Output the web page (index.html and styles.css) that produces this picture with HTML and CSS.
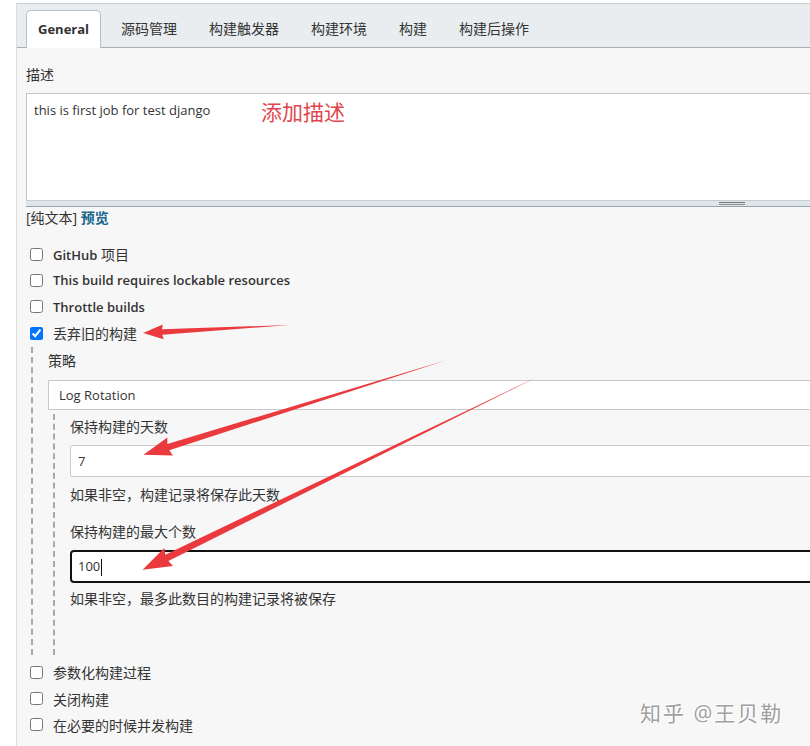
FILE: index.html
```html
<!DOCTYPE html>
<html lang="zh-CN">
<head>
    <meta charset="UTF-8">
    <meta name="viewport" content="width=device-width, initial-scale=1.0">
    <title>General - 配置</title>
    <link rel="stylesheet" href="styles.css">
</head>
<body>
<div class="page">
    <div class="tabbar">
        <div class="tab active">General</div>
        <div class="tab">源码管理</div>
        <div class="tab">构建触发器</div>
        <div class="tab">构建环境</div>
        <div class="tab">构建</div>
        <div class="tab">构建后操作</div>
    </div>

    <div class="content">
        <div class="label">描述</div>
        <div class="textarea">
            <div class="textarea-text">this is first job for test django</div>
            <span class="note">添加描述</span>
            <div class="textarea-handle"><span class="grip"></span></div>
        </div>
        <div class="format">[纯文本] <a class="preview">预览</a></div>

        <div class="options">
            <label class="option"><input type="checkbox"><span><b class="strong">GitHub</b> 项目</span></label>
            <label class="option"><input type="checkbox"><b class="strong">This build requires lockable resources</b></label>
            <label class="option"><input type="checkbox"><b class="strong">Throttle builds</b></label>
            <label class="option"><input type="checkbox" checked><span>丢弃旧的构建</span></label>
        </div>

        <div class="nested">
            <div class="label">策略</div>
            <div class="select">Log Rotation</div>
            <div class="nested inner">
                <div class="label">保持构建的天数</div>
                <div class="field">7</div>
                <div class="help">如果非空，构建记录将保存此天数</div>
                <div class="label second">保持构建的最大个数</div>
                <div class="field focused">100<span class="caret"></span></div>
                <div class="help help-last">如果非空，最多此数目的构建记录将被保存</div>
            </div>
        </div>

        <div class="options bottom">
            <label class="option"><input type="checkbox"><span>参数化构建过程</span></label>
            <label class="option"><input type="checkbox"><span>关闭构建</span></label>
            <label class="option"><input type="checkbox"><span>在必要的时候并发构建</span></label>
        </div>
    </div>
</div>

<!-- annotation arrows drawn over the screenshot -->
<svg class="arrows" width="810" height="746" viewBox="0 0 810 746">
    <g fill="#ea3a3d">
        <polygon transform="translate(290 325) rotate(176.9)" points="0,0 128,-2.8 127,-7.5 147,0 127,7.5 128,2.8"/>
        <polygon transform="translate(447 360) rotate(162.65)" points="0,0 292,-3.3 290,-9.5 318,0 290,9.5 292,3.3"/>
        <polygon transform="translate(537 377) rotate(153.96)" points="0,0 412,-3.5 410,-10 439,0 410,10 412,3.5"/>
    </g>
</svg>

<div class="watermark">知乎 @王贝勒</div>
</body>
</html>
```

FILE: styles.css
```css
body {
    margin: 0;
    background-color: #ffffff;
    color: #333333;
    font-family: "Open Sans", "Noto Sans CJK SC", sans-serif;
    font-size: 14px;
    position: relative;
    height: 746px;
    overflow: hidden;
}

.page {
    margin-left: 16px;
    margin-top: 3px;
    border-left: 1px solid #dcdcdc;
    border-top: 1px solid #c9cdd0;
    background-color: #f7f7f7;
    height: 742px;
    overflow: hidden;
}

.tabbar {
    display: flex;
    align-items: flex-end;
    height: 43px;
    padding-left: 9px;
    background-color: #e9edf0;
    border-bottom: 1px solid #a9b0b5;
}

.tab {
    height: 37px;
    line-height: 37px;
    padding: 0 16px;
    font-size: 14px;
    color: #333333;
    white-space: nowrap;
}

.tab.active {
    height: 37px;
    line-height: 37px;
    padding: 0 11px;
    margin-right: 4px;
    margin-bottom: -1px;
    background-color: #ffffff;
    border: 1px solid #b8bfc4;
    border-bottom: none;
    border-radius: 5px 5px 0 0;
    font-weight: bold;
    font-size: 13px;
}

.content {
    padding: 17px 0 0 9px;
}

.label {
    line-height: 20px;
    white-space: nowrap;
}

.textarea {
    position: relative;
    margin-top: 8px;
    margin-right: -20px;
    background-color: #ffffff;
    border: 1px solid #c4c4c4;
    border-bottom: none;
    height: 113px;
}

.textarea-text {
    padding: 6px 0 0 7px;
    font-size: 13px;
    line-height: 20px;
}

/* red annotation written onto the screenshot */
.note {
    position: absolute;
    left: 234px;
    top: 2px;
    font-size: 21px;
    color: #e0464d;
}

.textarea-handle {
    position: absolute;
    left: -1px;
    right: -1px;
    bottom: 0;
    height: 5px;
    background-color: #dfe6ea;
    border-top: 1px solid #c8d0d5;
    border-bottom: 1px solid #9aa3a9;
}

.grip {
    position: absolute;
    left: 693px;
    top: 1px;
    width: 26px;
    height: 1px;
    border-top: 1px solid #777777;
    border-bottom: 1px solid #8d8d8d;
}

.format {
    line-height: 20px;
    margin-top: 1px;
}

.preview {
    color: #17658a;
    font-weight: bold;
}

.options {
    margin-top: 13px;
}

.option {
    display: flex;
    align-items: center;
    height: 26.3px;
    white-space: nowrap;
}

.option input {
    width: 13px;
    height: 13px;
    margin: 0 10px 0 4px;
}

.strong {
    font-weight: 600;
    font-size: 13px;
}

.nested {
    margin-left: 5px;
    margin-top: 1px;
    border-left: 2px dashed #a9a9a9;
    padding: 4px 0 0 15px;
}

.nested.inner {
    margin-top: 4px;
    padding: 3px 0 46px 15px;
}

.select {
    margin-top: 9px;
    margin-right: -20px;
    height: 28px;
    line-height: 28px;
    padding-left: 10px;
    background-color: #ffffff;
    border: 1px solid #c8c8c8;
    font-size: 13px;
}

.field {
    margin-top: 8px;
    margin-right: -20px;
    height: 30px;
    line-height: 30px;
    padding-left: 7px;
    background-color: #ffffff;
    border: 1px solid #cccccc;
    border-radius: 2px;
    font-size: 13px;
}

.field.focused {
    height: 29px;
    line-height: 29px;
    padding-left: 6px;
    border: 2px solid #111111;
    border-radius: 4px;
}

.caret {
    display: inline-block;
    width: 0;
    height: 17px;
    border-left: 1px solid #111111;
    vertical-align: middle;
    margin-left: 1px;
}

.help {
    margin-top: 8px;
    line-height: 20px;
}

.label.second {
    margin-top: 17px;
}

.help.help-last {
    margin-top: 6px;
}

.options.bottom {
    margin-top: 4px;
}

.arrows {
    position: absolute;
    left: 0;
    top: 0;
    pointer-events: none;
}

.watermark {
    position: absolute;
    left: 640px;
    top: 697px;
    font-size: 21px;
    color: #a0a0a0;
    text-shadow: 1px 1px 0 #ffffff, -1px -1px 0 #ffffff;
    letter-spacing: 2px;
}
```
